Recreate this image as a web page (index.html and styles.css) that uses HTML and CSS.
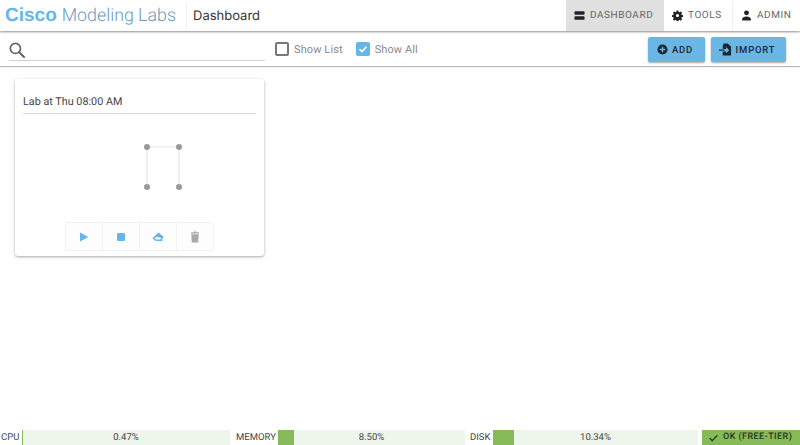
FILE: index.html
```html
<!DOCTYPE html>
<html lang="en">
<head>
<meta charset="utf-8">
<title>Cisco Modeling Labs - Dashboard</title>
<link rel="stylesheet" href="styles.css">
</head>
<body>
<div class="page">
  <header class="topbar">
    <div class="brand"><span class="brand-cisco">Cisco</span> <span class="brand-rest">Modeling Labs</span></div>
    <div class="page-title">Dashboard</div>
    <nav class="nav">
      <a class="nav-item nav-active">
        <svg class="nav-icon" viewBox="0 0 14 14"><path d="M2 1.500h10a1.500 1.500 0 0 1 1.500 1.500v1.500A1.500 1.500 0 0 1 12 6H2A1.500 1.500 0 0 1 .5 4.500V3A1.500 1.500 0 0 1 2 1.500zM2 8h10a1.500 1.500 0 0 1 1.500 1.500V11a1.500 1.500 0 0 1-1.500 1.500H2A1.500 1.500 0 0 1 .5 11V9.500A1.500 1.500 0 0 1 2 8z" fill="#222"/></svg>
        DASHBOARD
      </a>
      <a class="nav-item nav-tools">
        <svg class="nav-icon" viewBox="0 0 24 24"><path fill="#222" fill-rule="evenodd" d="M10 1h4l.6 3.200 1.900.8 2.700-1.800 2.800 2.800-1.800 2.700.8 1.900 3 .6v4l-3 .6-.8 1.900 1.800 2.700-2.800 2.800-2.700-1.800-1.900.8-.6 3h-4l-.6-3-1.900-.8-2.700 1.800-2.800-2.800 1.800-2.700-.8-1.900-3-.6v-4l3-.6.8-1.900-1.800-2.700 2.800-2.800 2.700 1.800 1.900-.8zM12 8.500a3.500 3.500 0 1 0 0 7 3.500 3.500 0 0 0 0-7z"/></svg>
        TOOLS
      </a>
      <a class="nav-item nav-admin">
        <svg class="nav-icon" viewBox="0 0 14 14"><circle cx="7" cy="3.600" r="3.100" fill="#222"/><path d="M1.500 13.500v-1.800c0-2.300 2.500-3.400 5.500-3.400s5.500 1.100 5.500 3.400v1.800z" fill="#222"/></svg>
        ADMIN
      </a>
    </nav>
  </header>

  <section class="toolbar">
    <div class="search">
      <svg class="search-icon" viewBox="0 0 18 18"><circle cx="7.200" cy="7.200" r="5.700" fill="none" stroke="#666" stroke-width="1.900"/><path d="M11.500 11.500l5.400 5.400" stroke="#666" stroke-width="2.200" stroke-linecap="round"/></svg>
    </div>
    <label class="check">
      <span class="box"></span>
      Show List
    </label>
    <label class="check check-all">
      <span class="box box-on"><svg viewBox="0 0 14 14"><path d="M3.500 7.200l2.500 2.400 4.500-4.800" fill="none" stroke="#fff" stroke-width="1.600"/></svg></span>
      Show All
    </label>
    <div class="actions">
      <button class="btn btn-add">
        <svg class="btn-icon" viewBox="0 0 12 12"><circle cx="6" cy="6" r="5.500" fill="#1c2630"/><path d="M3 6h6M6 3v6" stroke="#6ab7e6" stroke-width="1.500"/></svg>
        ADD
      </button>
      <button class="btn btn-import">
        <svg class="btn-icon btn-icon-import" viewBox="0 0 14 14"><path d="M5 .5h4.500L13 4v9.500H4V9.200h3.600V11L11 7.700 7.600 4.400v2H4v-3z" fill="#1c2630"/><path d="M0 7.700h6" stroke="#1c2630" stroke-width="1.300"/></svg>
        IMPORT
      </button>
    </div>
  </section>

  <main class="content">
    <article class="card">
      <h2 class="card-title">Lab at Thu 08:00 AM</h2>
      <div class="topology">
        <svg class="topology-svg" viewBox="0 0 42 50" width="42" height="50">
          <path d="M5 5H37M5 5V45M37 5V45" stroke="#e4e4e4" stroke-width="1.200" fill="none"/>
          <circle cx="5" cy="5" r="3" fill="#999"/>
          <circle cx="37" cy="5" r="3" fill="#999"/>
          <circle cx="5" cy="45" r="3" fill="#999"/>
          <circle cx="37" cy="45" r="3" fill="#999"/>
        </svg>
      </div>
      <div class="card-actions">
        <button class="tool"><svg viewBox="0 0 12 12"><path d="M2 1.500v9l8.400-4.500z" fill="#64b5e8"/></svg></button>
        <button class="tool"><svg viewBox="0 0 12 12"><rect x="2" y="2" width="8" height="8" rx="1" fill="#64b5e8"/></svg></button>
        <button class="tool"><svg viewBox="0 0 12 12"><path d="M6.500 1.500L11.800 6 10.400 7.300V10H3.800L.4 7.200z" fill="#64b5e8"/><path d="M3.900 6.300L2.600 7.300l1.700 1.300h3.900l1-1.100-1.500-1.200z" fill="#fff"/></svg></button>
        <button class="tool"><svg viewBox="0 0 12 12"><path d="M4.800.5h2.400l.5.700h2.300v1.300H2V1.200h2.300zM2.300 3.300h7.400l-.5 8.200H2.800z" fill="#aaa"/></svg></button>
      </div>
    </article>
  </main>

  <footer class="status">
    <div class="meter meter-cpu">
      <span class="meter-label">CPU</span>
      <div class="meter-track"><div class="meter-fill" style="width:0.47%"></div><span class="meter-value">0.47%</span></div>
    </div>
    <div class="meter meter-mem">
      <span class="meter-label">MEMORY</span>
      <div class="meter-track"><div class="meter-fill" style="width:8.5%"></div><span class="meter-value">8.50%</span></div>
    </div>
    <div class="meter meter-disk">
      <span class="meter-label">DISK</span>
      <div class="meter-track"><div class="meter-fill" style="width:10.34%"></div><span class="meter-value">10.34%</span></div>
    </div>
    <div class="ok">
      <svg class="ok-icon" viewBox="0 0 12 10"><path d="M1 5.300l3.300 3.200L11 1.500" fill="none" stroke="#1a2a10" stroke-width="1.500"/></svg>
      OK (FREE-TIER)
    </div>
  </footer>
</div>
</body>
</html>
```

FILE: styles.css
```css
* { box-sizing: border-box; }
html, body { margin: 0; padding: 0; }
body { font-family: Roboto, "Liberation Sans", sans-serif; background: #fff; color: #333; text-rendering: geometricPrecision; }

.page { width: 800px; height: 445px; display: flex; flex-direction: column; overflow: hidden; }

.topbar {
  height: 31px;
  flex: none;
  display: flex;
  align-items: center;
  background: #fff;
  box-shadow: 0 1px 2px rgba(0,0,0,.45);
  position: relative;
  z-index: 2;
}
.brand {
  width: 187px;
  height: 26px;
  padding-left: 5px;
  font-family: Roboto, sans-serif;
  line-height: 26px;
  border-right: 1px solid #eee;
  white-space: nowrap;
}
.brand-cisco { font-family: "Liberation Sans", sans-serif; font-size: 19px; color: #62b8e8; font-weight: 700; margin-right: 1px; }
.brand-rest { font-size: 17.800px; font-weight: 300; color: #6a9abb; }
.page-title {
  margin-left: 6px;
  font-family: Inter, sans-serif;
  font-size: 13px;
  color: #333;
}
.nav { margin-left: auto; display: flex; height: 100%; }
.nav-item {
  display: flex;
  align-items: center;
  gap: 5px;
  font-size: 10px;
  letter-spacing: .55px;
  color: #666;
  height: 31px;
}
.nav-active { width: 98px; padding-left: 8px; background: #e0e0e0; }
.nav-tools { width: 69px; padding-left: 8px; border-right: 1px solid #f0f0f0; }
.nav-admin { width: 67px; padding-left: 8px; }
.nav-icon { width: 11px; height: 11px; flex: none; }

.toolbar {
  height: 34px;
  flex: none;
  margin-top: 1px;
  display: flex;
  align-items: center;
  background: #fff;
  box-shadow: 0 1px 1px rgba(0,0,0,.28);
  position: relative;
  z-index: 1;
}
.search {
  margin-left: 9px;
  width: 256px;
  height: 29px;
  display: flex;
  align-items: center;
  border-bottom: 1px solid #d0d0d0;
  align-self: flex-start;
}
.search-icon { width: 16px; height: 16px; margin-top: 8px; }
.check {
  display: flex;
  align-items: center;
  gap: 5px;
  font-size: 11px;
  letter-spacing: .1px;
  color: #8a8a8a;
  margin-left: 10px;
}
.check-all { margin-left: 13px; }
.box {
  width: 14px;
  height: 14px;
  border: 2px solid #777;
  border-radius: 2px;
  display: block;
}
.box-on { border: 0; background: #64b5e8; }
.box-on svg { display: block; width: 14px; height: 14px; }
.actions { margin-left: auto; margin-right: 14px; display: flex; gap: 6px; }
.btn {
  height: 25px;
  border: 0;
  border-radius: 2px;
  background: #6ab7e6;
  box-shadow: 0 1px 2px rgba(0,0,0,.35);
  font-family: Roboto, sans-serif;
  font-size: 9.500px;
  font-weight: 500;
  letter-spacing: .8px;
  color: #1c2630;
  display: flex;
  align-items: center;
  justify-content: center;
  gap: 4px;
  padding: 0 3px 0 0;
}
.btn-add { width: 57px; }
.btn-import { width: 75px; }
.btn-icon { width: 11px; height: 11px; }
.btn-icon-import { width: 13px; height: 13px; }

.content { flex: 1; padding: 13px 15px; min-height: 0; }
.card {
  width: 249px;
  height: 177px;
  background: #fff;
  border-radius: 3px;
  box-shadow: 0 1px 3px rgba(0,0,0,.35);
  padding: 0 8px;
  display: flex;
  flex-direction: column;
}
.card-title {
  margin: 0;
  height: 35px;
  padding-top: 15px;
  font-size: 10.800px;
  line-height: 15px;
  font-weight: 400;
  color: #444;
  border-bottom: 1px solid #ddd;
}
.topology { height: 108px; display: flex; justify-content: center; padding-top: 28px; padding-left: 47px; }
.topology-svg { display: block; }
.card-actions {
  align-self: center;
  display: flex;
  width: 149px;
  height: 29px;
  border: 1px solid #f2f2f2;
  border-radius: 3px;
  background: #fdfdfd;
}
.tool {
  flex: 1;
  border: 0;
  background: transparent;
  border-right: 1px solid #f2f2f2;
  padding: 0;
  display: flex;
  align-items: center;
  justify-content: center;
}
.tool:last-child { border-right: 0; }
.tool svg { width: 12px; height: 12px; }

.status {
  height: 15px;
  flex: none;
  display: flex;
  font-size: 9.500px;
  line-height: 15px;
  color: #444;
}
.meter { display: flex; height: 15px; }
.meter-label { display: block; padding-left: 1px; white-space: nowrap; }
.meter-track { position: relative; height: 15px; background: #eef5ea; flex: 1; }
.meter-fill { height: 100%; background: #86b957; }
.meter-value { position: absolute; left: 0; right: 0; top: 0; text-align: center; }
.meter-cpu { width: 230px; }
.meter-cpu .meter-label { width: 22px; }
.meter-mem { width: 230px; margin-left: 5px; }
.meter-mem .meter-label { width: 43px; }
.meter-disk { width: 233px; }
.meter-disk .meter-label { width: 28px; padding-left: 5px; }
.ok {
  margin-left: 4px;
  width: 98px;
  background: #86b957;
  color: #26361a;
  font-size: 9px;
  letter-spacing: .45px;
  font-weight: 500;
  display: flex;
  align-items: center;
  gap: 5px;
  padding-left: 7px;
  white-space: nowrap;
}
.ok-icon { width: 9px; height: 8px; flex: none; }
```
